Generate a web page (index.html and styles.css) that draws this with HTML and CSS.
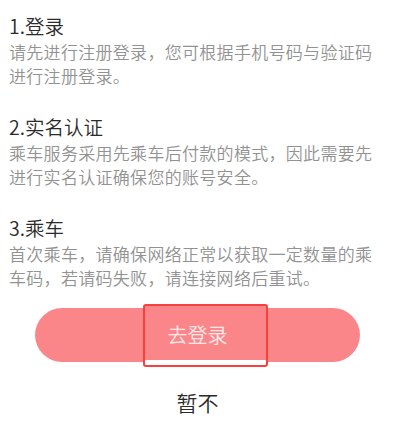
FILE: index.html
```html
<!DOCTYPE html>
<html lang="zh-CN">
<head>
<meta charset="utf-8">
<link rel="stylesheet" href="styles.css">
</head>
<body>
<div class="page">
  <section class="step">
    <h2 class="step-title">1.登录</h2>
    <p class="step-text">请先进行注册登录，您可根据手机号码与验证码进行注册登录。</p>
  </section>
  <section class="step">
    <h2 class="step-title">2.实名认证</h2>
    <p class="step-text">乘车服务采用先乘车后付款的模式，因此需要先进行实名认证确保您的账号安全。</p>
  </section>
  <section class="step">
    <h2 class="step-title">3.乘车</h2>
    <p class="step-text">首次乘车，请确保网络正常以获取一定数量的乘车码，若请码失败，请连接网络后重试。</p>
  </section>
  <div class="actions">
    <div class="login-btn">
      <span class="highlight"></span>
      <span class="login-label">去登录</span>
    </div>
    <div class="skip">暂不</div>
  </div>
</div>
</body>
</html>
```

FILE: styles.css
```css
html, body {
  margin: 0;
  padding: 0;
  background: #ffffff;
}
body {
  font-family: "Noto Sans CJK SC", "Noto Sans", sans-serif;
  width: 408px;
  height: 422px;
  overflow: hidden;
}
.page {
  padding: 12px 0 0 9px;
  display: flex;
  flex-direction: column;
  gap: 25px;
}
.step {
  margin: 0;
}
.step-title {
  margin: 0;
  font-size: 19.5px;
  font-weight: 350;
  line-height: 28px;
  color: #2a2a2a;
}
.step-text {
  margin: 0;
  width: 370px;
  font-size: 17px;
  font-weight: 350;
  letter-spacing: 0.3px;
  line-height: 24px;
  color: #929292;
}
.actions {
  margin-top: -7px;
  margin-left: 26px;
  width: 325px;
  display: flex;
  flex-direction: column;
  align-items: center;
}
.login-btn {
  position: relative;
  width: 325px;
  height: 54px;
  border-radius: 27px;
  background: #fb868a;
  display: flex;
  align-items: center;
  justify-content: center;
}
.highlight {
  position: absolute;
  left: 108px;
  top: -4px;
  width: 121px;
  height: 59px;
  border: 2px solid #f8403c;
  border-radius: 3px;
  background: linear-gradient(to bottom, #fb868a 0, #fb868a 54px, #ffffff 54px);
}
.login-label {
  position: relative;
  font-size: 20px;
  font-weight: 350;
  color: #fde8e8;
  line-height: 28px;
}
.skip {
  margin-top: 26px;
  font-size: 21px;
  font-weight: 350;
  line-height: 28px;
  color: #2a2a2a;
}
```
